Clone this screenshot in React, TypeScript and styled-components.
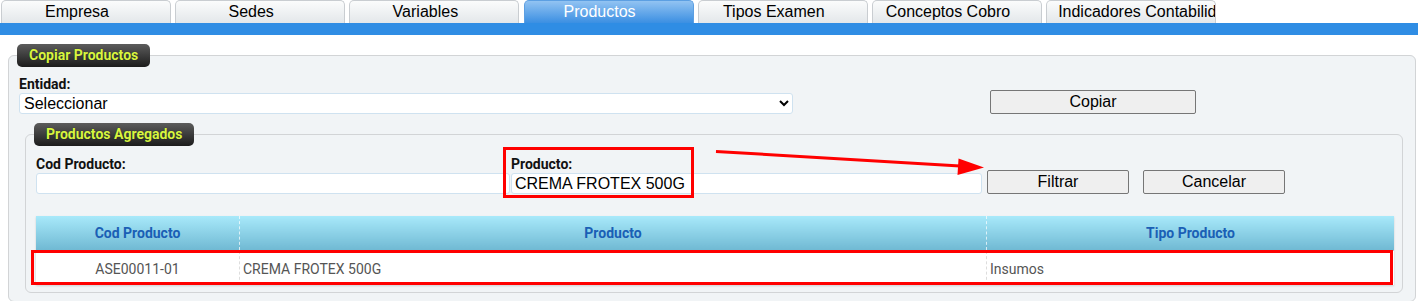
import React from "react";
import styled, { createGlobalStyle } from "styled-components";

const GlobalStyle = createGlobalStyle`
  body {
    margin: 0;
    background: #ffffff;
    font-family: "Liberation Sans", Arial, sans-serif;
  }
`;

const Page = styled.div`
  position: relative;
  width: 1418px;
  height: 301px;
  overflow: hidden;
`;

const TabBar = styled.div`
  display: flex;
  gap: 4.2px;
  padding-left: 1px;
  height: 23px;
`;

const Tab = styled.div<{ $active?: boolean }>`
  box-sizing: border-box;
  width: 170px;
  height: 23px;
  padding: 0 29px 0 11px;
  border: 1px solid ${(props) => (props.$active ? "#5c9fe2" : "#c9cdd1")};
  border-bottom: none;
  border-radius: 5px 5px 0 0;
  background: ${(props) =>
    props.$active
      ? "linear-gradient(#92c3f2, #3b8fe2)"
      : "linear-gradient(#fbfcfc, #e3e7ea)"};
  color: ${(props) => (props.$active ? "#ffffff" : "#000000")};
  font-family: "Liberation Sans", Arial, sans-serif;
  font-size: 16px;
  line-height: 22px;
  text-align: center;
  white-space: nowrap;
  overflow: hidden;
`;

const BlueBar = styled.div`
  height: 12px;
  background: #2f8de4;
`;

const Fieldset = styled.fieldset<{ $inner?: boolean }>`
  margin: ${(props) => (props.$inner ? "9px 2px 0 6px" : "9px 2px 0 8px")};
  padding: ${(props) => (props.$inner ? "10px 10px 7px" : "9px 10px 8px")};
  border: 1px solid #d2d4d6;
  border-radius: 6px;
  background: #f1f4f6;
  min-width: 0;
`;

const Legend = styled.legend`
  box-sizing: border-box;
  height: 23px;
  margin-left: -2px;
  padding: 0 12px;
  border-radius: 5px;
  background: linear-gradient(#5c5c5c, #1c1c1c);
  color: #d8f540;
  font-family: Roboto, "Liberation Sans", sans-serif;
  font-weight: 700;
  font-size: 14px;
  line-height: 23px;
  text-shadow: 0 0 1px rgba(0, 0, 0, 0.6);
`;

const Row = styled.div`
  display: flex;
  align-items: flex-end;
`;

const Field = styled.div<{ $w: number; $gap?: number }>`
  display: flex;
  flex-direction: column;
  gap: 1px;
  width: ${(props) => props.$w}px;
  margin-left: ${(props) => props.$gap || 0}px;
`;

const Label = styled.label`
  font-family: Roboto, "Liberation Sans", sans-serif;
  font-weight: 700;
  font-size: 14px;
  line-height: 16px;
  color: #111111;
`;

const Select = styled.select`
  box-sizing: border-box;
  width: 100%;
  height: 21px;
  padding: 0 6px 0 0;
  border: 1px solid #cfe2f0;
  border-radius: 3px;
  background: #ffffff;
  color: #000000;
  font-family: "Liberation Sans", Arial, sans-serif;
  font-size: 16px;
`;

const TextInput = styled.input`
  box-sizing: border-box;
  width: 100%;
  height: 21px;
  padding: 0 3px;
  border: 1px solid #cfe2f0;
  border-radius: 3px;
  background: #ffffff;
  color: #000000;
  font-family: "Liberation Sans", Arial, sans-serif;
  font-size: 16px;
  outline: none;
`;

const Button = styled.button<{ $w: number; $gap?: number }>`
  box-sizing: border-box;
  width: ${(props) => props.$w}px;
  height: 24px;
  margin-left: ${(props) => props.$gap || 0}px;
  border: 1px solid #767676;
  border-radius: 2px;
  background: #efefef;
  color: #000000;
  font-family: "Liberation Sans", Arial, sans-serif;
  font-size: 16px;
  padding: 0;
`;

const Table = styled.table`
  width: 1356px;
  margin-top: 22px;
  border-collapse: collapse;
  table-layout: fixed;
  background: #ffffff;
  box-shadow: 0 1px 2px rgba(0, 0, 0, 0.15);
  font-family: Roboto, "Liberation Sans", sans-serif;
  font-size: 14px;
`;

const HeadCell = styled.th<{ $w: number }>`
  width: ${(props) => props.$w}px;
  height: 34px;
  padding: 0;
  background: linear-gradient(#a8e9fa, #70b9d3);
  color: #1a5fb5;
  font-weight: 700;
  text-align: center;
  border-left: 1px dashed rgba(255, 255, 255, 0.7);
  border-bottom: 1px solid #b7c6cf;

  &:first-child {
    border-left: none;
  }
`;

const Cell = styled.td<{ $center?: boolean }>`
  height: 33px;
  padding: 1px 3px 0;
  color: #555555;
  text-align: ${(props) => (props.$center ? "center" : "left")};
  border-left: 1px dashed #dddddd;

  &:first-child {
    border-left: none;
  }
`;

const Highlight = styled.div<{ $x: number; $y: number; $w: number; $h: number }>`
  position: absolute;
  left: ${(props) => props.$x}px;
  top: ${(props) => props.$y}px;
  width: ${(props) => props.$w}px;
  height: ${(props) => props.$h}px;
  box-sizing: border-box;
  border: 3px solid #ff0000;
  pointer-events: none;
`;

const Arrow = styled.svg`
  position: absolute;
  left: 700px;
  top: 140px;
  width: 300px;
  height: 45px;
  pointer-events: none;
`;

const tabs = [
  "Empresa",
  "Sedes",
  "Variables",
  "Productos",
  "Tipos Examen",
  "Conceptos Cobro",
  "Indicadores Contabilidad",
];

export default function App() {
  return (
    <Page>
      <GlobalStyle />
      <TabBar>
        {tabs.map((t) => (
          <Tab key={t} $active={t === "Productos"}>
            {t}
          </Tab>
        ))}
      </TabBar>
      <BlueBar />

      <Fieldset>
        <Legend>Copiar Productos</Legend>
        <Row>
          <Field $w={774}>
            <Label>Entidad:</Label>
            <Select defaultValue="">
              <option value="">Seleccionar</option>
            </Select>
          </Field>
          <Button $w={206} $gap={197}>
            Copiar
          </Button>
        </Row>

        <Fieldset $inner>
          <Legend>Productos Agregados</Legend>
          <Row>
            <Field $w={474}>
              <Label>Cod Producto:</Label>
              <TextInput defaultValue="" />
            </Field>
            <Field $w={471} $gap={1}>
              <Label>Producto:</Label>
              <TextInput defaultValue="CREMA FROTEX 500G" />
            </Field>
            <Button $w={142} $gap={5}>
              Filtrar
            </Button>
            <Button $w={142} $gap={14}>
              Cancelar
            </Button>
          </Row>

          <Table>
            <thead>
              <tr>
                <HeadCell $w={203}>Cod Producto</HeadCell>
                <HeadCell $w={746}>Producto</HeadCell>
                <HeadCell $w={407}>Tipo Producto</HeadCell>
              </tr>
            </thead>
            <tbody>
              <tr>
                <Cell $center>ASE00011-01</Cell>
                <Cell>CREMA FROTEX 500G</Cell>
                <Cell>Insumos</Cell>
              </tr>
            </tbody>
          </Table>
        </Fieldset>
      </Fieldset>

      <Highlight $x={503} $y={147} $w={191} $h={51} />
      <Highlight $x={31} $y={250} $w={1362} $h={35} />
      <Arrow viewBox="0 0 300 45">
        <line x1="16" y1="11.5" x2="260" y2="26" stroke="#ff0000" strokeWidth="3" />
        <polygon points="284,27.5 258.5,18.5 257.5,35" fill="#ff0000" />
      </Arrow>
    </Page>
  );
}
